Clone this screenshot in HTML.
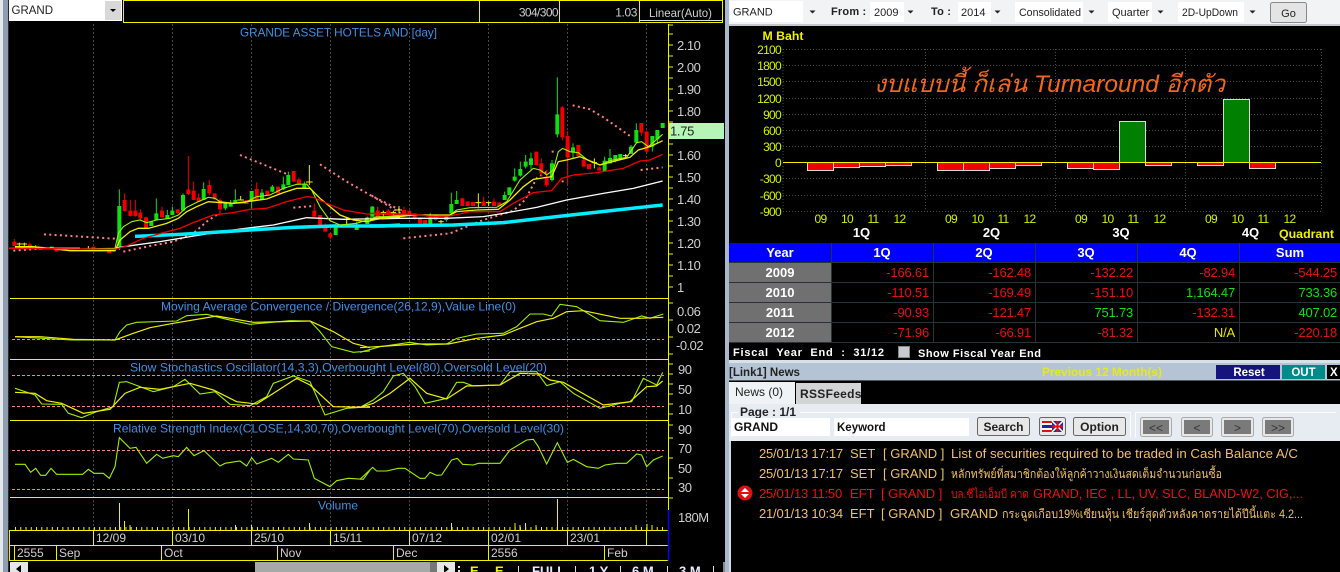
<!DOCTYPE html>
<html><head><meta charset="utf-8"><title>GRAND</title>
<style>
html,body{margin:0;padding:0;background:#000;width:1340px;height:572px;overflow:hidden}
svg{display:block;position:absolute;left:0;top:0}
text{font-family:"Liberation Sans","DejaVu Sans","Noto Sans CJK SC",sans-serif;white-space:pre}
.ln{fill:none;vector-effect:non-scaling-stroke}
.b{font-weight:bold}
.t{fill:#3f8fe6;font-size:12px}
.ax{fill:#cfcfcf;font-size:13px;letter-spacing:-.5px}
.dt{fill:#cfcfcf;font-size:12px}
.tb{fill:#222;font-size:11px}
.yl{fill:#d4f000;font-size:12px;letter-spacing:-.7px}
.r{fill:#e81010;font-size:13px;text-anchor:end;letter-spacing:-.2px}
.g{fill:#10e010;font-size:13px;text-anchor:end;letter-spacing:-.2px}
.hd{fill:#fff;font-size:13px;font-weight:bold;text-anchor:middle}
.n{fill:#efc068;font-size:13px}
.n2{fill:#ef1010;font-size:13px}
.ns{fill:#efc068;font-size:12px}
.ns2{fill:#ef1010;font-size:12px}
</style></head><body>
<svg width="1340" height="572" viewBox="0 0 1340 572" xmlns="http://www.w3.org/2000/svg">
<rect width="1340" height="572" fill="#000"/>
<!-- left window edges -->
<rect x="0" y="0" width="3" height="572" fill="#e4e8ec"/>
<rect x="3" y="0" width="5" height="572" fill="#8f9db0"/>
<rect x="8" y="0" width="1" height="572" fill="#2a2a2a"/>
<rect x="725" y="0" width="4" height="572" fill="#a9b8cd"/>
<!-- symbol combo -->
<rect x="9" y="0" width="113" height="21" fill="#fff"/>
<rect x="105" y="1" width="16" height="19" fill="#d8d8d8"/>
<path d="M110 9h6l-3 3z" fill="#000"/>
<text x="11.500" y="14" font-size="11.500" fill="#222">GRAND</text>
<!-- top yellow box -->
<g fill="none" stroke="#f0f000" stroke-width="1">
<rect x="123.500" y="0.500" width="599" height="22"/>
<path d="M479.500 0V22M559.500 0V22M639.500 0V22"/>
</g>
<path d="M640 20.500H722" stroke="#ddd"/>
<text x="558" y="16.500" text-anchor="end" class="dt" letter-spacing="-.6">304/300</text>
<text x="637" y="16.500" text-anchor="end" class="dt" letter-spacing="-.4">1.03</text>
<text x="680.500" y="17" text-anchor="middle" class="dt" textLength="63" lengthAdjust="spacingAndGlyphs">Linear(Auto)</text>
<!-- title -->
<text x="240" y="36.500" class="t" textLength="197" lengthAdjust="spacingAndGlyphs">GRANDE ASSET HOTELS AND [day]</text>
<!-- grid verticals -->
<path d="M93.500 24V530M172.500 24V530M251.500 24V530M330.500 24V530M409.500 24V530M488.500 24V530M567.500 24V530M646.500 24V530" stroke="#484848" stroke-dasharray="2 2" fill="none"/>
<!-- pane lines -->
<path d="M10 298.500H668M10 359.500H668M10 420.500H668M10 497.500H668M10 530.500H668M10 545.500H668M10 560.500H668" stroke="#f0f000" fill="none"/>
<path d="M9.500 530V561M93.500 530V545M172.500 530V545M251.500 530V545M330.500 530V545M409.500 530V545M488.500 530V545M567.500 530V545M646.500 530V545M14.500 545V560M56.500 545V560M161.500 545V560M277.500 545V560M393.500 545V560M488.500 545V560M604.500 545V560" stroke="#f0f000" fill="none"/>
<!-- dashed levels -->
<path d="M12 339.500H664M12 375.500H664M12 406.500H664M12 450.500H664M12 489.500H664" stroke="#ff8080" stroke-dasharray="3 2" fill="none"/>
<!-- right axis -->
<path d="M668.500 24V510" stroke="#f0f000" fill="none"/>
<path d="M668.500 510V561" stroke="#0000ff" stroke-width="1.500" fill="none"/>
<path d="M668 25h5M668 34h5M668 45h5M668 56h5M668 67h5M668 78h5M668 89h5M668 100h5M668 111h5M668 122h5M668 133h5M668 144h5M668 155h5M668 166h5M668 177h5M668 188h5M668 199h5M668 210h5M668 221h5M668 232h5M668 243h5M668 254h5M668 265h5M668 276h5M668 287h5M668 303h5M668 320h5M668 337h5M668 354h5M668 364h5M668 374h5M668 384h5M668 394h5M668 404h5M668 414h5M668 425h5M668 438h5M668 458h5M668 478h5M668 498h5" stroke="#f0f000" fill="none"/>
<g class="ax">
<text x="677" y="50" class="ax">2.10</text><text x="677" y="72" class="ax">2.00</text><text x="677" y="94" class="ax">1.90</text><text x="677" y="116" class="ax">1.80</text><text x="677" y="160" class="ax">1.60</text><text x="677" y="182" class="ax">1.50</text><text x="677" y="204" class="ax">1.40</text><text x="677" y="226" class="ax">1.30</text><text x="677" y="248" class="ax">1.20</text><text x="677" y="270" class="ax">1.10</text><text x="677" y="292" class="ax">1</text>
<text x="677" y="316" class="ax">0.06</text><text x="677" y="333" class="ax">0.02</text><text x="676" y="350" class="ax">-0.02</text>
<text x="678" y="374" class="ax">90</text><text x="678" y="394" class="ax">50</text><text x="678" y="414" class="ax">10</text><text x="678" y="434" class="ax">90</text><text x="678" y="453" class="ax">70</text><text x="678" y="473" class="ax">50</text><text x="678" y="492" class="ax">30</text><text x="678" y="522" class="ax">180M</text>
</g>
<rect x="669" y="123" width="55" height="16" fill="#b5f5b5"/>
<text x="670" y="135.500" font-size="13" fill="#222" letter-spacing="-.3">1.75</text>

<!-- candles + MAs left half, zoom coords -->
<g transform="scale(.33333)">
<path class="ln" stroke="#ff8080" stroke-width="2" stroke-dasharray="2 3.300" d="M132 703L345 716M40 752L120 746M370 755L450 738L520 725L580 700L620 665L660 638M720 465L860 522M880 623L940 618M960 493L1040 545L1110 585L1200 630"/>
<path fill="none" stroke="#10e010" stroke-width="3" d="M358 568V750M374 0M469 595V660M502 630V655M517 620V645M549 580V632M611 547V600M676 610V630M692 600V620M706 568V610M755 573V625M786 567V600M817 555V577M850 530V570M865 515V555M913 545V565M1007 672V705M1070 665V690M1102 650V672M1117 618V650M107 735V750"/>
<path fill="none" stroke="#10e010" stroke-width="12" d="M358 618V740M454 665V678M469 640V660M502 645V655M517 632V645M549 585V632M611 567V600M676 610V625M692 610V620M706 600V610M755 573V605M786 578V598M817 560V575M850 553V568M865 525V555M913 553V565M1007 675V705M1070 675V690M1102 652V672M1117 628V650M155 740V748"/>
<path fill="none" stroke="#f00000" stroke-width="3" d="M374 580V635M391 600V650M406 600V650M421 628V660M438 650V685M486 620V652M533 628V640M565 468V585M581 545V600M596 580V605M628 540V585M644 580V600M660 595V640M740 600V612M770 547V600M802 572V586M834 560V580M881 513V545M897 533V552M943 610V650M960 645V675M976 670V695M991 698V718M1133 622V650M1165 628V645M43 717V738M90 728V745"/>
<path fill="none" stroke="#f00000" stroke-width="12" d="M374 600V633M391 632V648M406 632V648M421 638V655M438 652V685M486 632V652M533 628V640M565 568V582M581 572V600M596 593V605M628 555V580M644 580V598M660 600V628M740 600V612M770 567V600M802 572V586M834 560V580M881 513V545M897 538V552M943 632V650M960 645V675M976 675V695M991 700V712M1133 632V650M1165 632V645M43 725V738M90 733V745M122 740V750M170 745V755M280 740V750M328 752V760"/>
<path fill="none" stroke="#f0f000" stroke-width="3" d="M722 588V600M712 600H732M928 495V555M918 546H938M1040 652V675M1030 658H1050M1150 635V650M1140 640H1160M1181 635V650M1172 640H1190M58 728V738M50 732H66M73 728V738M65 732H81M265 738V748"/>
<path class="ln" stroke="#fff" stroke-width="1.300" d="M28 745H240M345 745L370 740L480 725L600 705L720 687L820 675L920 653L1030 658L1200 655"/>
<path class="ln" stroke="#00eeff" stroke-width="3.500" d="M405 709L540 703L640 697L750 690L880 682L1000 678L1150 678L1200 675"/>
<path class="ln" stroke="#9ef000" stroke-width="1.100" d="M45 742L180 748L345 745L355 700L370 680L395 665L420 660L440 668L470 660L510 655L535 645L560 622L590 607L625 592L645 595L660 605L700 610L735 608L770 590L810 585L850 565L890 553L920 552L935 570L960 620L990 662L1020 675L1070 670L1100 660L1130 650L1200 650"/>
<path class="ln" stroke="#f0f000" stroke-width="1.300" d="M45 740L100 740L210 752L345 752L360 720L390 695L415 685L445 685L500 670L535 655L560 635L590 620L625 605L650 607L700 610L740 605L800 597L850 578L890 565L930 565L960 595L990 620L1020 645L1060 660L1100 665L1140 655L1200 650"/>
<path class="ln" stroke="#f00000" stroke-width="1.300" d="M28 745L345 748L380 738L430 715L490 698L540 685L580 668L640 645L700 638L750 628L800 625L860 605L920 590L940 592L980 610L1030 630L1100 642L1200 645"/>
</g>
<!-- candles + MAs right half -->
<g transform="translate(370 0) scale(.33333)">
<path class="ln" stroke="#ff8080" stroke-width="2" stroke-dasharray="2 3.300" d="M5 587L100 645M100 715L240 700L340 660L430 632L465 600L500 535L530 515M545 455L560 455M575 545L590 540M608 316L660 328L700 352L780 408M812 510L878 502"/>
<path fill="none" stroke="#10e010" stroke-width="3" d="M244 578V640M260 573V612M181 640V672M229 645V665M404 575V600M418 562V585M434 505V545M451 485V530M467 465V505M483 458V508M546 480V545M562 232V412M609 430V475M704 470V513M720 447V490M736 465V487M751 462V480M783 435V462M799 370V430M847 408V455M862 390V430"/>
<path fill="none" stroke="#10e010" stroke-width="12" d="M7 620V650M181 652V672M229 647V660M244 612V640M260 600V612M404 585V600M418 562V585M434 530V542M451 507V527M467 485V500M483 475V495M546 490V540M562 343V403M609 442V458M704 482V513M720 474V490M736 465V482M751 462V478M783 440V462M799 390V428M847 408V440M862 390V418M878 369V384"/>
<path fill="none" stroke="#f00000" stroke-width="3" d="M23 620V650M55 627V645M102 620V642M134 640V660M197 645V662M277 593V618M341 590V618M372 595V618M499 455V495M514 475V530M530 510V560M577 318V420M593 393V553M625 435V470M641 472V500M688 500V512M814 369V407M830 392V460"/>
<path fill="none" stroke="#f00000" stroke-width="12" d="M23 632V648M55 632V645M102 630V642M118 632V648M134 640V655M150 652V670M165 660V672M197 645V660M277 595V618M293 604V618M309 606V618M341 605V618M372 605V618M388 607V618M499 455V495M514 490V520M530 530V555M577 322V412M593 408V472M625 435V468M641 480V500M657 492V507M688 502V512M814 369V398M830 395V455"/>
<path fill="none" stroke="#f0f000" stroke-width="3" d="M40 632V645M32 638H48M70 632V645M62 638H78M87 618V640M78 630H96M213 660V670M205 665H221M325 580V625M316 608H334M356 605V618M348 608H364M673 475V505M665 488H681M767 462V475M759 467H775"/>
<path class="ln" stroke="#fff" stroke-width="1.300" d="M0 655L230 655L340 650L400 640L500 622L590 600L700 580L790 565L878 543"/>
<path class="ln" stroke="#00eeff" stroke-width="3.500" d="M0 678L250 675L400 668L560 650L740 630L878 615"/>
<path class="ln" stroke="#9ef000" stroke-width="1.100" d="M0 655L100 645L240 645L260 630L300 623L380 622L410 605L450 540L490 505L510 510L530 525L550 510L565 455L578 445L600 455L625 458L650 478L690 495L720 482L770 472L800 428L815 425L835 440L878 403"/>
<path class="ln" stroke="#f0f000" stroke-width="1.300" d="M0 660L130 645L240 645L260 635L320 630L385 628L420 600L460 560L490 538L545 530L565 485L590 480L630 470L660 483L690 495L740 482L780 472L805 450L840 440L878 422"/>
<path class="ln" stroke="#f00000" stroke-width="1.300" d="M0 640L130 643L190 650L240 648L300 635L390 635L430 610L490 578L545 572L575 535L610 525L680 518L760 505L810 483L840 480L878 463"/>
</g>
<!-- oscillators left -->
<g transform="translate(0 290) scale(.33333)">
<path class="ln" stroke="#9ef000" stroke-width="1.100" d="M45 140L130 145L160 147L215 150L345 150L360 125L380 105L410 97L530 93L560 77L620 73L680 88L750 103L870 92L930 93L960 125L995 170L1060 187L1110 183"/>
<path class="ln" stroke="#f0f000" stroke-width="1.200" d="M45 140L120 140L220 148L345 150L400 130L450 113L520 100L650 78L760 97L930 93L1000 125L1060 160L1110 173"/>
<path class="ln" stroke="#9ef000" stroke-width="1.100" d="M45 295L105 315L125 342L185 343L205 370L245 383L290 365L340 350L358 277L380 275L460 305L520 290L555 268L600 312L645 305L690 343L750 347L800 320L820 280L880 258L930 275L975 375L1040 355L1110 350"/>
<path class="ln" stroke="#f0f000" stroke-width="1.200" d="M45 307L105 310L140 332L185 340L250 370L330 358L375 310L420 292L480 298L570 280L640 300L710 335L770 342L820 310L890 265L930 285L1000 350L1110 352"/>
<path class="ln" stroke="#9ef000" stroke-width="1.100" d="M45 523L75 523L92 547L107 535L122 556L137 556L153 535L170 553L248 553L265 538L282 550L310 550L328 565L345 530L358 443L390 475L408 472L440 520L470 493L488 505L520 497L535 500L560 472L582 497L612 482L660 528L675 520L720 513L740 528L755 503L770 522L815 505L835 517L865 493L880 507L925 510L943 565L990 590L1010 572L1045 565L1090 568L1110 540"/>
</g>
<!-- oscillators right -->
<g transform="translate(360 290) scale(.33333)">
<path class="ln" stroke="#9ef000" stroke-width="1.100" d="M0 187L60 170L150 157L200 165L260 162L290 145L350 132L430 130L470 110L510 72L550 72L575 78L600 43L650 50L720 92L790 97L845 78L870 85L910 72"/>
<path class="ln" stroke="#f0f000" stroke-width="1.200" d="M0 173L80 168L170 162L265 162L350 145L430 135L530 95L580 85L620 65L670 62L780 85L840 85L910 82"/>
<path class="ln" stroke="#9ef000" stroke-width="1.100" d="M0 352L40 330L70 305L100 258L130 250L165 290L195 340L260 325L290 277L310 277L340 288L420 285L450 245L530 245L560 287L600 275L640 310L720 355L780 340L815 335L850 265L890 285L908 247"/>
<path class="ln" stroke="#f0f000" stroke-width="1.200" d="M0 352L40 340L90 310L150 265L200 310L260 327L320 288L420 285L480 250L540 252L570 270L610 277L730 345L810 335L860 290L890 288L908 273"/>
<path class="ln" stroke="#9ef000" stroke-width="1.100" d="M0 568L38 532L50 543L80 543L115 535L135 535L180 565L195 565L210 547L230 556L245 555L275 510L292 505L308 523L340 525L355 520L420 520L450 480L500 450L520 448L535 470L560 522L592 458L622 517L640 508L680 530L715 535L735 525L770 520L800 520L830 492L845 495L860 530L880 510L908 498"/>
</g>
<!-- pane titles -->
<text x="161" y="310.500" class="t" textLength="355" lengthAdjust="spacingAndGlyphs">Moving Average Convergence / Divergence(26,12,9),Value Line(0)</text>
<text x="130" y="371.500" class="t" textLength="417" lengthAdjust="spacingAndGlyphs">Slow Stochastics Oscillator(14,3,3),Overbought Level(80),Oversold Level(20)</text>
<text x="113" y="432.500" class="t" textLength="451" lengthAdjust="spacingAndGlyphs">Relative Strength Index(CLOSE,14,30,70),Overbought Level(70),Oversold Level(30)</text>
<text x="318" y="509.500" class="t" textLength="40" lengthAdjust="spacingAndGlyphs">Volume</text>
<!-- volume -->
<path d="M15 528.500H665" stroke="#f0f000" stroke-width="3" stroke-dasharray="1 4.260" fill="none"/>
<path d="M119.500 503V530M124.500 521V530M188.500 509V530M557.500 499V530M130 525V530M309.500 523V530M235.500 525V530M251.500 525V530M451.500 523V530M515 523V530M520 525V530M525.500 523V530M536 525V530M636 525V530M647 524V530M652 525V530" stroke="#f0f000" fill="none"/>
<!-- dates -->
<g class="dt">
<text x="96" y="542" class="dt">12/09</text><text x="175" y="542" class="dt">03/10</text><text x="254" y="542" class="dt">25/10</text><text x="333" y="542" class="dt">15/11</text><text x="412" y="542" class="dt">07/12</text><text x="491" y="542" class="dt">02/01</text><text x="570" y="542" class="dt">23/01</text>
<text x="17" y="557" class="dt">2555</text><text x="59" y="557" class="dt">Sep</text><text x="164" y="557" class="dt">Oct</text><text x="280" y="557" class="dt">Nov</text><text x="396" y="557" class="dt">Dec</text><text x="491" y="557" class="dt">2556</text><text x="607" y="557" class="dt">Feb</text>
</g>
<!-- scrollbar row -->
<rect x="10" y="562" width="18" height="10" fill="#e6e6e6"/><path d="M21 565l-5 4 5 4z" fill="#000"/>
<rect x="255" y="562" width="175" height="10" fill="#a8a8a8"/>
<rect x="430" y="562" width="7" height="10" fill="#777"/>
<rect x="437" y="562" width="18" height="10" fill="#e6e6e6"/><path d="M444 565l5 4-5 4z" fill="#000"/>
<path d="M458 566h2v2h-2zM458 570h2v2h-2z" fill="#ddd"/>
<g font-size="13" font-weight="bold">
<text x="470" y="575.500" fill="#f0f000">E.</text><text x="495" y="575.500" fill="#f0f000">E</text>
<path d="M518.500 566V572M575.500 566V572M620.500 566V572M667.500 566V572M713.500 566V572" stroke="#ddd" fill="none"/>
<text x="532" y="575.500" fill="#e6ecff">FULL</text><text x="589" y="575.500" fill="#e6ecff">1 Y</text><text x="632" y="575.500" fill="#e6ecff">6 M</text><text x="679" y="575.500" fill="#e6ecff">3 M</text>
</g>
<rect x="723" y="562" width="2" height="10" fill="#888"/>
<!-- RIGHT PANEL toolbar -->
<rect x="729" y="0" width="611" height="24" fill="#f2f3f4"/>
<rect x="729" y="24" width="611" height="2" fill="#c4c8cc"/>
<rect x="730" y="1" width="73" height="21" fill="#fff"/><rect x="870" y="2" width="34" height="20" fill="#fff"/><rect x="958" y="2" width="33" height="20" fill="#fff"/><rect x="1015" y="2" width="68" height="20" fill="#fff"/><rect x="1108" y="2" width="44" height="20" fill="#fff"/><rect x="1178" y="2" width="66" height="20" fill="#fff"/>
<path d="M809.500 10.500h6l-3 3zM907.500 10.500h6l-3 3zM994.500 10.500h6l-3 3zM1088.500 10.500h6l-3 3zM1157.500 10.500h6l-3 3zM1249.500 10.500h6l-3 3z" fill="#222"/>
<text x="733" y="15.500" class="tb">GRAND</text>
<text x="831" y="15" class="tb b" font-size="12" letter-spacing=".2">From :</text>
<text x="874" y="16" class="tb">2009</text>
<text x="931" y="15" class="tb b" font-size="12" letter-spacing=".2">To :</text>
<text x="961" y="16" class="tb">2014</text>
<text x="1019" y="16" class="tb" textLength="62" lengthAdjust="spacingAndGlyphs">Consolidated</text>
<text x="1112" y="16" class="tb">Quarter</text>
<text x="1182" y="16" class="tb" textLength="56" lengthAdjust="spacingAndGlyphs">2D-UpDown</text>
<rect x="1270.500" y="2.500" width="36" height="20" rx="2" fill="#e4e4e4" stroke="#888"/>
<text x="1288.500" y="17" class="tb" text-anchor="middle">Go</text>
<!-- bar chart -->
<text x="762.500" y="40" font-size="12" font-weight="bold" fill="#f0f000" textLength="41" lengthAdjust="spacingAndGlyphs">M Baht</text>
<g fill="none" stroke="#4a4a4a" stroke-dasharray="1 2">
<path d="M783 49.500H1321M783 65.500H1321M783 81.500H1321M783 98.500H1321M783 114.500H1321M783 130.500H1321M783 146.500H1321M783 178.500H1321M783 195.500H1321M783 211.500H1321M783 49V211M925.500 49V211M1055.500 49V211M1185.500 49V211M1321.500 49V211"/>
</g>
<g text-anchor="end">
<text x="781" y="54" class="yl">2100</text><text x="781" y="70" class="yl">1800</text><text x="781" y="86" class="yl">1500</text><text x="781" y="103" class="yl">1200</text><text x="781" y="119" class="yl">900</text><text x="781" y="135" class="yl">600</text><text x="781" y="151" class="yl">300</text><text x="781" y="167" class="yl">0</text><text x="781" y="183" class="yl">-300</text><text x="781" y="200" class="yl">-600</text><text x="781" y="216" class="yl">-900</text>
</g>
<g fill="#f00000" stroke="#d8d8d8">
<rect x="807.500" y="162.500" width="26" height="8"/><rect x="833.500" y="162.500" width="26" height="5"/><rect x="859.500" y="162.500" width="26" height="4"/><rect x="885.500" y="162.500" width="26" height="3"/>
<rect x="937.500" y="162.500" width="26" height="8"/><rect x="963.500" y="162.500" width="26" height="8"/><rect x="989.500" y="162.500" width="26" height="6"/><rect x="1015.500" y="162.500" width="26" height="3"/>
<rect x="1067.500" y="162.500" width="26" height="6"/><rect x="1093.500" y="162.500" width="26" height="7"/><rect x="1145.500" y="162.500" width="26" height="3"/>
<rect x="1197.500" y="162.500" width="26" height="3"/><rect x="1249.500" y="162.500" width="26" height="6"/>
</g>
<g fill="#008000" stroke="#d8d8d8">
<rect x="1119.500" y="121.500" width="26" height="41"/><rect x="1223.500" y="99.500" width="26" height="63"/>
</g>
<path d="M783 162.500H1321" stroke="#f0f000" fill="none"/>
<text x="874" y="92" font-size="24" font-style="italic" fill="#f2661e" textLength="351" lengthAdjust="spacingAndGlyphs">งบแบบนี้ ก็เล่น Turnaround อีกตัว</text>
<g text-anchor="middle">
<text x="820.500" y="223" class="yl">09</text><text x="847" y="223" class="yl">10</text><text x="873" y="223" class="yl">11</text><text x="899.500" y="223" class="yl">12</text>
<text x="951" y="223" class="yl">09</text><text x="977.500" y="223" class="yl">10</text><text x="1003" y="223" class="yl">11</text><text x="1029.500" y="223" class="yl">12</text>
<text x="1081" y="223" class="yl">09</text><text x="1107.500" y="223" class="yl">10</text><text x="1133" y="223" class="yl">11</text><text x="1159.500" y="223" class="yl">12</text>
<text x="1211" y="223" class="yl">09</text><text x="1237.500" y="223" class="yl">10</text><text x="1263" y="223" class="yl">11</text><text x="1289.500" y="223" class="yl">12</text>
<text x="861.500" y="237" fill="#fff" font-size="13" font-weight="bold">1Q</text><text x="991.500" y="237" fill="#fff" font-size="13" font-weight="bold">2Q</text><text x="1121" y="237" fill="#fff" font-size="13" font-weight="bold">3Q</text><text x="1250.500" y="237" fill="#fff" font-size="13" font-weight="bold">4Q</text>
</g>
<text x="1279" y="238" font-size="12" font-weight="bold" fill="#f0f000" textLength="55" lengthAdjust="spacingAndGlyphs">Quadrant</text>
<!-- table -->
<rect x="729" y="243" width="611" height="19" fill="#0000ff"/>
<rect x="729" y="262" width="102" height="80" fill="#707070"/>
<path d="M729 262.500H1340M729 282.500H1340M729 302.500H1340M729 322.500H1340M729 342.500H1340M831.500 243V342M933.500 243V342M1035.500 243V342M1137.500 243V342M1239.500 243V342" stroke="#263436" fill="none"/>
<text x="780" y="257" class="hd">Year</text><text x="882" y="257" class="hd">1Q</text><text x="984" y="257" class="hd">2Q</text><text x="1086" y="257" class="hd">3Q</text><text x="1188" y="257" class="hd">4Q</text><text x="1290" y="257" class="hd">Sum</text>
<text x="780" y="277" class="hd">2009</text><text x="780" y="297" class="hd">2010</text><text x="780" y="317" class="hd">2011</text><text x="780" y="337" class="hd">2012</text>
<text x="929" y="277" class="r">-166.61</text><text x="1031" y="277" class="r">-162.48</text><text x="1133" y="277" class="r">-132.22</text><text x="1235" y="277" class="r">-82.94</text><text x="1337" y="277" class="r">-544.25</text>
<text x="929" y="297" class="r">-110.51</text><text x="1031" y="297" class="r">-169.49</text><text x="1133" y="297" class="r">-151.10</text><text x="1235" y="297" class="g">1,164.47</text><text x="1337" y="297" class="g">733.36</text>
<text x="929" y="317" class="r">-90.93</text><text x="1031" y="317" class="r">-121.47</text><text x="1133" y="317" class="g">751.73</text><text x="1235" y="317" class="r">-132.31</text><text x="1337" y="317" class="g">407.02</text>
<text x="929" y="337" class="r">-71.96</text><text x="1031" y="337" class="r">-66.91</text><text x="1133" y="337" class="r">-81.32</text><text x="1235" y="337" class="r" style="fill:#e8e800">N/A</text><text x="1337" y="337" class="r">-220.18</text>
<text x="733" y="356" font-size="11" font-weight="bold" fill="#fff" textLength="151">Fiscal  Year  End  :  31/12</text>
<rect x="898.500" y="346.500" width="11" height="11" fill="#c8ccd0" stroke="#888"/>
<text x="918" y="357" font-size="11" font-weight="bold" fill="#fff" textLength="123">Show Fiscal Year End</text>
<!-- news header -->
<rect x="729" y="360" width="611" height="3" fill="#d8e0e8"/>
<rect x="729" y="363" width="611" height="17" fill="#b4c4d4"/>
<rect x="729" y="380" width="611" height="1" fill="#555"/>
<text x="729" y="376" font-size="11.500" font-weight="bold" fill="#222">[Link1] News</text>
<text x="1042" y="376" font-size="11.500" font-weight="bold" fill="#e8e820" textLength="120" lengthAdjust="spacingAndGlyphs">Previous 12 Month(s)</text>
<rect x="1216" y="365" width="64" height="14" fill="#14147a"/><text x="1249" y="376" font-size="11.500" font-weight="bold" fill="#fff" text-anchor="middle">Reset</text>
<rect x="1282" y="365" width="43" height="14" fill="#008a8a"/><text x="1303.500" y="376" font-size="11.500" font-weight="bold" fill="#fff" text-anchor="middle">OUT</text>
<rect x="1327" y="365" width="13" height="14" fill="#000"/><text x="1330" y="376" font-size="11.500" font-weight="bold" fill="#fff">X</text>
<!-- tabs -->
<rect x="729" y="381" width="611" height="23" fill="#000"/>
<rect x="729" y="382" width="66" height="22" fill="#f0f3f6"/>
<rect x="796" y="383" width="65" height="21" fill="#d2d4d6"/>
<text x="735" y="396" font-size="12" fill="#222">News (0)</text>
<text x="800" y="398" font-size="12" font-weight="bold" fill="#222" letter-spacing=".3">RSSFeeds</text>
<!-- search panel -->
<rect x="729" y="404" width="611" height="37" fill="#e6ecf2"/>
<path d="M731.500 437.500V412.500H1130.500V437.500M1135.500 437.500V412.500H1336" fill="none" stroke="#fafcff"/>
<rect x="738" y="408" width="62" height="9" fill="#e6ecf2"/>
<text x="740" y="416" font-size="12" font-weight="bold" fill="#222">Page : 1/1</text>
<rect x="731" y="418" width="99" height="18" fill="#fff"/><rect x="834" y="418" width="135" height="18" fill="#fff"/>
<text x="734" y="431" font-size="12" font-weight="bold" fill="#111">GRAND</text>
<text x="837" y="431" font-size="11.500" font-weight="bold" fill="#111">Keyword</text>
<g stroke="#666" fill="#e8e8e8"><rect x="977.500" y="417.500" width="52" height="18" rx="2"/><rect x="1039.500" y="417.500" width="26" height="18" rx="2"/><rect x="1073.500" y="417.500" width="52" height="18" rx="2"/></g>
<text x="1003.500" y="431" font-size="12" font-weight="bold" fill="#222" text-anchor="middle">Search</text>
<text x="1099.500" y="431" font-size="12" font-weight="bold" fill="#222" text-anchor="middle">Option</text>
<rect x="1042" y="421" width="10" height="11" fill="#fff"/><rect x="1042" y="421" width="10" height="2" fill="#e01010"/><rect x="1042" y="430" width="10" height="2" fill="#e01010"/><rect x="1042" y="425" width="10" height="3" fill="#2020a0"/>
<rect x="1052" y="421" width="11" height="11" fill="#2a2a90"/><path d="M1052 421l11 11M1063 421l-11 11" stroke="#fff" stroke-width="1.500"/><path d="M1057.500 421v11M1052 426.500h11" stroke="#e01010" stroke-width="2"/>
<g stroke="#aaa" fill="#e8e8e8"><rect x="1140.500" y="417.500" width="31" height="19" rx="2"/><rect x="1181.500" y="417.500" width="31" height="19" rx="2"/><rect x="1221.500" y="417.500" width="32" height="19" rx="2"/><rect x="1262.500" y="417.500" width="31" height="19" rx="2"/></g>
<g fill="#7a7a7a"><rect x="1143" y="420" width="26" height="14"/><rect x="1184" y="420" width="26" height="14"/><rect x="1224" y="420" width="27" height="14"/><rect x="1265" y="420" width="26" height="14"/></g>
<g font-size="12" fill="#333" text-anchor="middle"><text x="1156" y="432">&lt;&lt;</text><text x="1197" y="432">&lt;</text><text x="1237.500" y="432">&gt;</text><text x="1278" y="432">&gt;&gt;</text></g>
<!-- news list -->
<rect x="729" y="441" width="2" height="131" fill="#d0d8e0"/>
<rect x="731" y="441" width="609" height="131" fill="#000"/>
<text x="759" y="458" class="n" letter-spacing="-.2">25/01/13 17:17</text><text x="850" y="458" class="n">SET</text><text x="883" y="458" class="n">[ GRAND ]</text><text x="951" y="458" class="n" textLength="347" lengthAdjust="spacingAndGlyphs">List of securities required to be traded in Cash Balance A/C</text>
<text x="759" y="478" class="n" letter-spacing="-.2">25/01/13 17:17</text><text x="850" y="478" class="n">SET</text><text x="883" y="478" class="n">[ GRAND ]</text><text x="951" y="478" class="ns" textLength="271" lengthAdjust="spacingAndGlyphs">หลักทรัพย์ที่สมาชิกต้องให้ลูกค้าวางเงินสดเต็มจำนวนก่อนซื้อ</text>
<text x="759" y="498" class="n2" letter-spacing="-.2">25/01/13 11:50</text><text x="850" y="498" class="n2">EFT</text><text x="881" y="498" class="n2">[ GRAND ]</text><text x="951" y="498" class="ns2" textLength="78" lengthAdjust="spacingAndGlyphs">บล.ซีไอเอ็มบี คาด</text><text x="1033" y="498" class="n2" textLength="270" lengthAdjust="spacingAndGlyphs">GRAND, IEC , LL, UV, SLC, BLAND-W2, CIG,...</text>
<circle cx="745" cy="493" r="7.500" fill="#e01010"/><path d="M745 488l5 5-5 5-5-5z" fill="#fff"/><rect x="739" y="492" width="12" height="2" fill="#e01010"/>
<text x="759" y="518" class="n" letter-spacing="-.2">21/01/13 10:34</text><text x="850" y="518" class="n">EFT</text><text x="881" y="518" class="n">[ GRAND ]</text><text x="950" y="518" class="n" textLength="48" lengthAdjust="spacingAndGlyphs">GRAND</text><text x="1002" y="518" class="ns" textLength="301" lengthAdjust="spacingAndGlyphs">กระฉูดเกือบ19%เซียนหุ้น เชียร์สุดตัวหลังคาดรายได้ปีนี้แตะ 4.2...</text>
</svg>
</body></html>
